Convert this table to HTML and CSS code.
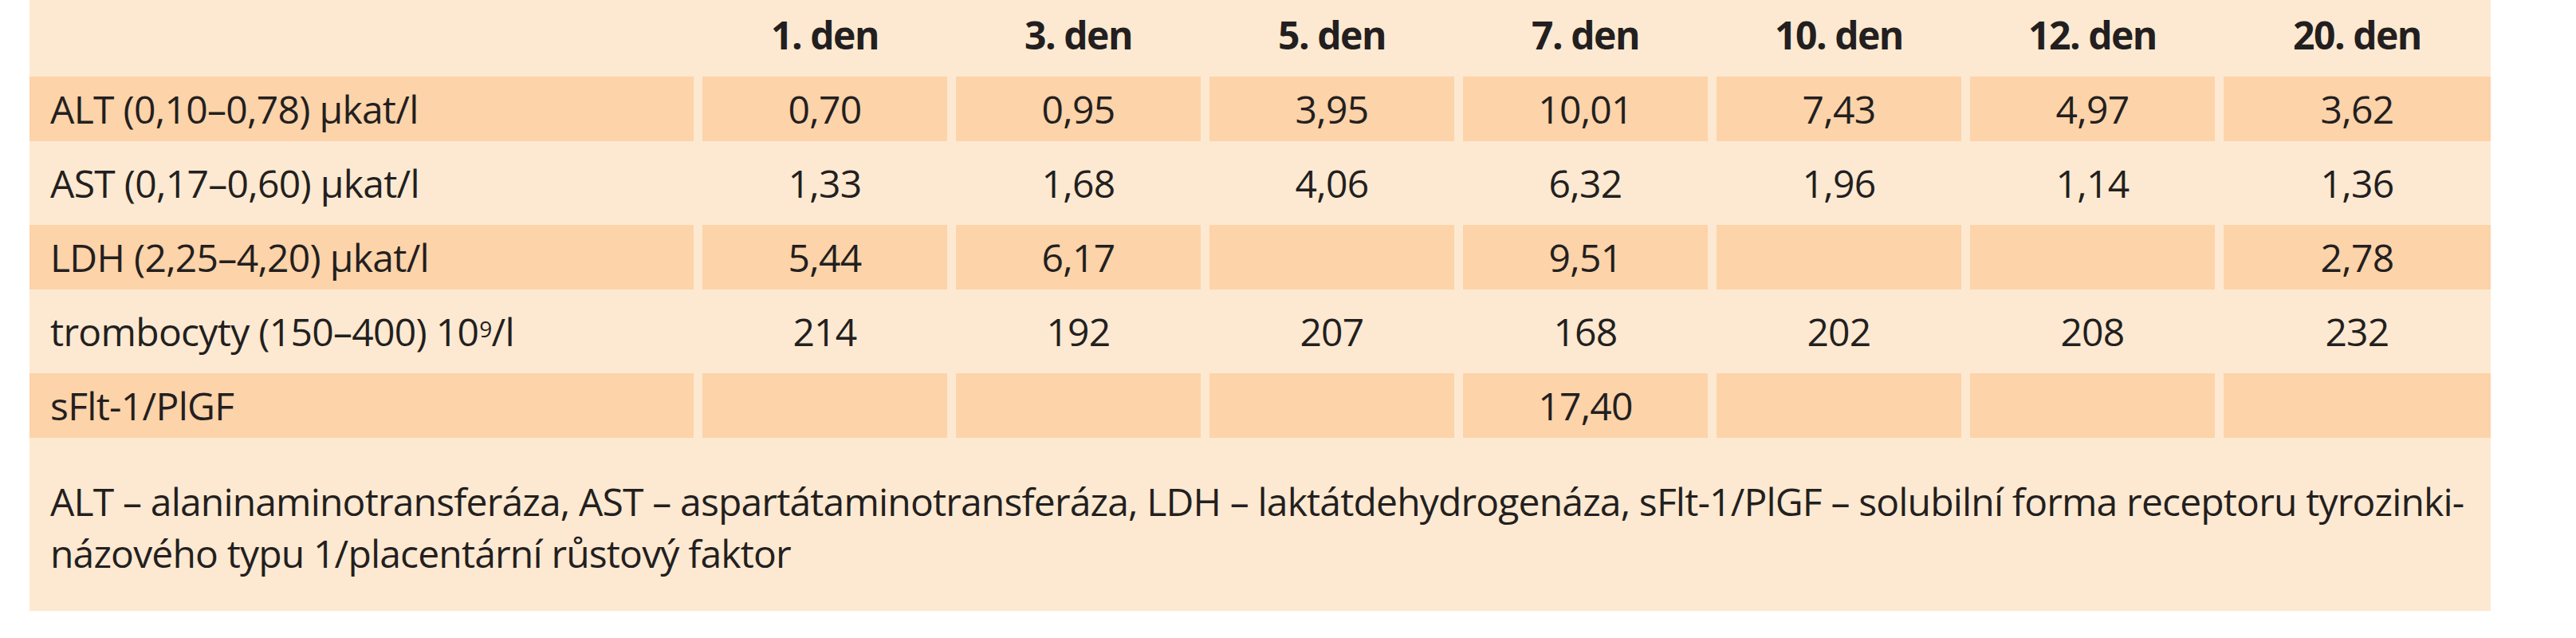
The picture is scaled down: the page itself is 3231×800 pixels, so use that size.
FILE: index.html
```html
<!DOCTYPE html>
<html lang="cs">
<head>
<meta charset="utf-8">
<title>Tabulka</title>
<link rel="stylesheet" href="styles.css">
</head>
<body>
<div class="panel">
  <div class="grid">
    <div class="cell head label"></div>
    <div class="cell head">1. den</div>
    <div class="cell head">3. den</div>
    <div class="cell head">5. den</div>
    <div class="cell head">7. den</div>
    <div class="cell head">10. den</div>
    <div class="cell head">12. den</div>
    <div class="cell head">20. den</div>

    <div class="cell dark label">ALT (0,10–0,78) µkat/l</div>
    <div class="cell dark">0,70</div>
    <div class="cell dark">0,95</div>
    <div class="cell dark">3,95</div>
    <div class="cell dark">10,01</div>
    <div class="cell dark">7,43</div>
    <div class="cell dark">4,97</div>
    <div class="cell dark">3,62</div>

    <div class="cell label">AST (0,17–0,60) µkat/l</div>
    <div class="cell">1,33</div>
    <div class="cell">1,68</div>
    <div class="cell">4,06</div>
    <div class="cell">6,32</div>
    <div class="cell">1,96</div>
    <div class="cell">1,14</div>
    <div class="cell">1,36</div>

    <div class="cell dark label">LDH (2,25–4,20) µkat/l</div>
    <div class="cell dark">5,44</div>
    <div class="cell dark">6,17</div>
    <div class="cell dark"></div>
    <div class="cell dark">9,51</div>
    <div class="cell dark"></div>
    <div class="cell dark"></div>
    <div class="cell dark">2,78</div>

    <div class="cell label">trombocyty (150–400) 10<sup>9</sup>/l</div>
    <div class="cell">214</div>
    <div class="cell">192</div>
    <div class="cell">207</div>
    <div class="cell">168</div>
    <div class="cell">202</div>
    <div class="cell">208</div>
    <div class="cell">232</div>

    <div class="cell dark label">sFlt-1/PlGF</div>
    <div class="cell dark"></div>
    <div class="cell dark"></div>
    <div class="cell dark"></div>
    <div class="cell dark">17,40</div>
    <div class="cell dark"></div>
    <div class="cell dark"></div>
    <div class="cell dark"></div>
  </div>
  <div class="note">
    <span class="line">ALT – alaninaminotransferáza, AST – aspartátaminotransferáza, LDH – laktátdehydrogenáza, sFlt-1/PlGF – solubilní forma receptoru tyrozinki-</span>
    <span class="line">názového typu 1/placentární růstový faktor</span>
  </div>
</div>
</body>
</html>
```

FILE: styles.css
```css
html, body {
  margin: 0;
  padding: 0;
  background: #ffffff;
}

body {
  font-family: "Open Sans", "Noto Sans", "Liberation Sans", sans-serif;
  color: #231f20;
}

.panel {
  margin-left: 37px;
  width: 3087px;
  background: #fde9d1;
  padding-bottom: 40px;
}

.grid {
  display: grid;
  grid-template-columns: 833px repeat(6, 307px) 335px;
  grid-template-rows: 84px repeat(5, 81px);
  column-gap: 11px;
  row-gap: 12px;
}

.cell {
  display: flex;
  align-items: center;
  justify-content: center;
  font-size: 48px;
  letter-spacing: -0.7px;
  line-height: 1;
  white-space: nowrap;
}

.cell.label {
  justify-content: flex-start;
  padding-left: 26px;
}

.cell.head {
  font-weight: 700;
  letter-spacing: -1.5px;
  padding-top: 3px;
}

.cell.dark {
  background: #fdd3a9;
}

.cell sup {
  font-size: 28px;
  line-height: 0;
  position: relative;
  top: -4px;
  vertical-align: super;
  margin-left: 1px;
}

.note {
  margin-top: 47px;
  padding-left: 26px;
  font-size: 48px;
  line-height: 65px;
  letter-spacing: -0.83px;
}

.note .line {
  display: block;
  white-space: nowrap;
}
```
